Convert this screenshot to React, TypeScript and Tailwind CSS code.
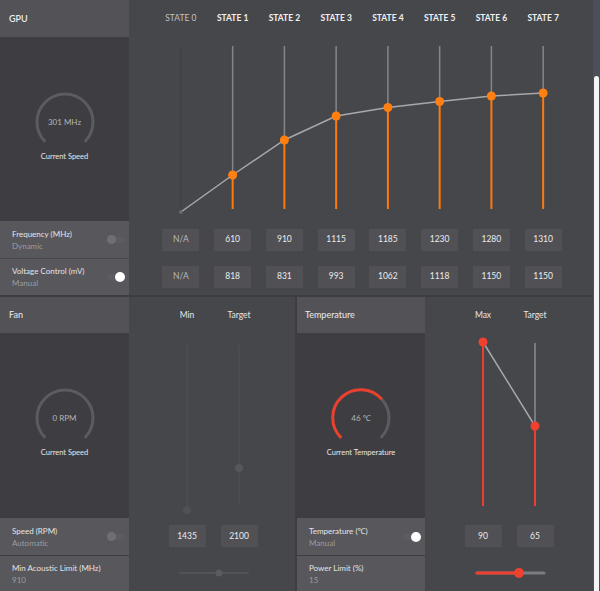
import React from "react";

const states = [
  { label: "STATE 0", freq: "N/A", volt: "N/A", dot: null as number | null },
  { label: "STATE 1", freq: "610", volt: "818", dot: 138 },
  { label: "STATE 2", freq: "910", volt: "831", dot: 103 },
  { label: "STATE 3", freq: "1115", volt: "993", dot: 79 },
  { label: "STATE 4", freq: "1185", volt: "1062", dot: 70.5 },
  { label: "STATE 5", freq: "1230", volt: "1118", dot: 64.5 },
  { label: "STATE 6", freq: "1280", volt: "1150", dot: 59 },
  { label: "STATE 7", freq: "1310", volt: "1150", dot: 56 },
];

const colX = (i: number) => 51.9 + 51.75 * i;

const Gauge = ({ value, label, percent }: { value: string; label: string; percent?: boolean }) => (
  <div className="flex flex-col items-center pb-[7px]">
    <div className="relative w-[64px] h-[60px]">
      <svg width="64" height="60" viewBox="0 0 64 60">
        {percent ? (
          <>
            <path d="M52.8 13.3 A28 28 0 0 1 51.8 51.8" fill="none" stroke="#5b5c60" strokeWidth="3" />
            <path d="M12.2 51.8 A28 28 0 1 1 52.8 13.3" fill="none" stroke="#ea412f" strokeWidth="3" />
          </>
        ) : (
          <path d="M12.2 51.8 A28 28 0 1 1 51.8 51.8" fill="none" stroke="#5b5c60" strokeWidth="3" />
        )}
      </svg>
      <span className="absolute left-0 right-0 top-[26px] text-center text-[8px] leading-[12px] text-[#b4b4b8]">
        {value}
      </span>
    </div>
    <span className="mt-[1px] text-[7.5px] leading-[11px] text-[#e6e6e8]">{label}</span>
  </div>
);

const Toggle = ({ on }: { on?: boolean }) => (
  <div className="relative w-[17px] h-[6px] rounded-full bg-[#5c5c61]">
    {on ? (
      <div className="absolute right-[-1px] top-[-2px] w-[10px] h-[10px] rounded-full bg-white" />
    ) : (
      <div className="absolute left-[0px] top-[-1.5px] w-[9px] h-[9px] rounded-full bg-[#6e6e73]" />
    )}
  </div>
);

const RowCell = ({ title, sub, toggle, on, className }: { title: string; sub: string; toggle?: boolean; on?: boolean; className?: string }) => (
  <div className={`flex items-center justify-between bg-[#57575c] pl-[12px] pr-[5px] ${className ?? ""}`}>
    <div className="flex flex-col">
      <span className="text-[8px] leading-[12px] text-[#e4e4e6]">{title}</span>
      <span className="text-[8px] leading-[12px] text-[#9c9ca0]">{sub}</span>
    </div>
    {toggle && <Toggle on={on} />}
  </div>
);

const ValueBox = ({ v, dim }: { v: string; dim?: boolean }) => (
  <div className={`w-[37px] h-[22px] flex items-center justify-center bg-[#505055] text-[8.5px] ${dim ? "text-[#b8b8bc]" : "text-[#ececee]"}`}>
    {v}
  </div>
);

const Pair = ({ children }: { children: React.ReactNode }) => (
  <div className="flex pl-[32px]">{children}</div>
);

export default function App() {
  const pts = states.map((s, i) => `${colX(i)},${s.dot ?? 175}`).join(" ");
  return (
    <div className="flex w-[600px] h-[591px] overflow-hidden bg-[#3d3d41]" style={{ fontFamily: "Lato, 'Noto Sans', sans-serif" }}>
      <div className="flex flex-col w-[593px]">
        {/* GPU */}
        <div className="flex flex-col h-[295px] bg-[#46474b]">
          <div className="flex h-[37px]">
            <div className="w-[129px] flex items-center pl-[9px] bg-[#525257] text-[9px] font-semibold text-[#ececee]">GPU</div>
            <div className="flex-1 grid grid-cols-8 pl-[26px] pr-[24px]">
              {states.map((s, i) => (
                <div
                  key={s.label}
                  className={`flex items-center justify-center text-[8.5px] ${i === 0 ? "text-[#c2c2c6]" : "font-bold text-[#f0f0f2]"}`}
                >
                  {s.label}
                </div>
              ))}
            </div>
          </div>
          <div className="flex h-[184px]">
            <div className="w-[129px] flex items-center justify-center bg-[#3e3e42]">
              <Gauge value="301 MHz" label="Current Speed" />
            </div>
            <svg width="464" height="184" viewBox="0 0 464 184">
              <line x1={colX(0)} y1="9" x2={colX(0)} y2="175" stroke="#404145" strokeWidth="1.2" />
              {states.slice(1).map((s, j) => {
                const x = colX(j + 1);
                return (
                  <g key={s.label}>
                    <line x1={x} y1="9" x2={x} y2={s.dot!} stroke="#85868a" strokeWidth="1.5" />
                    <line x1={x} y1={s.dot!} x2={x} y2="172" stroke="#ff7a0a" strokeWidth="2" />
                  </g>
                );
              })}
              <polyline points={pts} fill="none" stroke="#a8a8ac" strokeWidth="1.5" />
              <circle cx={colX(0)} cy="175" r="2" fill="#6a6b6f" />
              {states.slice(1).map((s, j) => (
                <circle key={s.label} cx={colX(j + 1)} cy={s.dot!} r="4.5" fill="#ff7f10" />
              ))}
            </svg>
          </div>
          <div className="flex h-[37px]">
            <RowCell className="w-[129px]" title="Frequency (MHz)" sub="Dynamic" toggle />
            <div className="flex-1 grid grid-cols-8 pl-[26px] pr-[24px]">
              {states.map((s, i) => (
                <div key={s.label} className="flex items-center justify-center">
                  <ValueBox v={s.freq} dim={i === 0} />
                </div>
              ))}
            </div>
          </div>
          <div className="flex h-[37px]">
            <RowCell className="w-[129px] border-t border-[#48484c]" title="Voltage Control (mV)" sub="Manual" toggle on />
            <div className="flex-1 grid grid-cols-8 pl-[26px] pr-[24px]">
              {states.map((s, i) => (
                <div key={s.label} className="flex items-center justify-center">
                  <ValueBox v={s.volt} dim={i === 0} />
                </div>
              ))}
            </div>
          </div>
        </div>

        {/* Fan + Temperature */}
        <div className="flex mt-[2px] h-[294px]">
          <div className="w-[129px] flex flex-col">
            <div className="h-[36px] flex items-center pl-[9px] bg-[#525257] text-[9px] text-[#ececee]">Fan</div>
            <div className="h-[184px] flex items-center justify-center bg-[#3e3e42]">
              <Gauge value="0 RPM" label="Current Speed" />
            </div>
            <RowCell className="h-[37px] mt-[1px]" title="Speed (RPM)" sub="Automatic" toggle />
            <RowCell className="h-[35px] mt-[1px]" title="Min Acoustic Limit (MHz)" sub="910" />
          </div>

          <div className="w-[166px] flex flex-col bg-[#46474b]">
            <div className="h-[36px] flex items-center pl-[32px] text-[8.5px] text-[#e6e6e8]">
              <span className="w-[52px] text-center">Min</span>
              <span className="w-[52px] text-center">Target</span>
            </div>
            <svg width="166" height="184" viewBox="0 0 166 184">
              <line x1="58" y1="12" x2="58" y2="177" stroke="#525357" strokeWidth="1" />
              <circle cx="58" cy="177" r="4" fill="#505155" />
              <line x1="110" y1="12" x2="110" y2="172" stroke="#525357" strokeWidth="1" />
              <circle cx="110" cy="135" r="4" fill="#56575b" />
            </svg>
            <div className="h-[38px] flex items-center">
              <Pair>
                <div className="w-[52px] flex justify-center"><ValueBox v="1435" /></div>
                <div className="w-[52px] flex justify-center"><ValueBox v="2100" /></div>
              </Pair>
            </div>
            <div className="h-[36px] flex items-center">
              <svg width="166" height="12" viewBox="0 0 166 12">
                <line x1="51" y1="6" x2="119" y2="6" stroke="#535458" strokeWidth="2" strokeLinecap="round" />
                <circle cx="90" cy="6" r="3.5" fill="#5a5b5f" />
              </svg>
            </div>
          </div>

          <div className="w-[2px]" />

          <div className="w-[128px] flex flex-col">
            <div className="h-[36px] flex items-center pl-[8px] bg-[#525257] text-[9px] text-[#ececee]">Temperature</div>
            <div className="h-[184px] flex items-center justify-center bg-[#3e3e42]">
              <Gauge value="46 ℃" label="Current Temperature" percent />
            </div>
            <RowCell className="h-[37px] mt-[1px]" title="Temperature (℃)" sub="Manual" toggle on />
            <RowCell className="h-[35px] mt-[1px]" title="Power Limit (%)" sub="15" />
          </div>

          <div className="flex-1 flex flex-col bg-[#46474b]">
            <div className="h-[36px] flex items-center pl-[32px] text-[8.5px] text-[#e6e6e8]">
              <span className="w-[52px] text-center">Max</span>
              <span className="w-[52px] text-center">Target</span>
            </div>
            <svg width="168" height="184" viewBox="0 0 168 184">
              <line x1="110" y1="10" x2="110" y2="93" stroke="#8a8b8f" strokeWidth="1.5" />
              <line x1="58" y1="9" x2="58" y2="173" stroke="#ec3f2f" strokeWidth="2" />
              <line x1="110" y1="93" x2="110" y2="173" stroke="#ec3f2f" strokeWidth="2" />
              <line x1="58" y1="9" x2="110" y2="93" stroke="#a8a8ac" strokeWidth="1.5" />
              <circle cx="58" cy="9" r="4.5" fill="#f0412f" />
              <circle cx="110" cy="93" r="4.5" fill="#f0412f" />
            </svg>
            <div className="h-[38px] flex items-center">
              <Pair>
                <div className="w-[52px] flex justify-center"><ValueBox v="90" /></div>
                <div className="w-[52px] flex justify-center"><ValueBox v="65" /></div>
              </Pair>
            </div>
            <div className="h-[36px] flex items-center">
              <svg width="168" height="12" viewBox="0 0 168 12">
                <line x1="52" y1="6" x2="119" y2="6" stroke="#7b7c80" strokeWidth="3" strokeLinecap="round" />
                <line x1="52" y1="6" x2="94" y2="6" stroke="#ec3f2f" strokeWidth="3" strokeLinecap="round" />
                <circle cx="94" cy="6" r="5" fill="#f0412f" />
              </svg>
            </div>
          </div>
        </div>
      </div>

      {/* scrollbar */}
      <div className="w-[7px] flex flex-col bg-[#4b5058]">
        <div className="h-[76px]" />
        <div className="flex-1 ml-[1px] mr-[1px] rounded-t-[3px] bg-[#f4f4f6]" />
      </div>
    </div>
  );
}
